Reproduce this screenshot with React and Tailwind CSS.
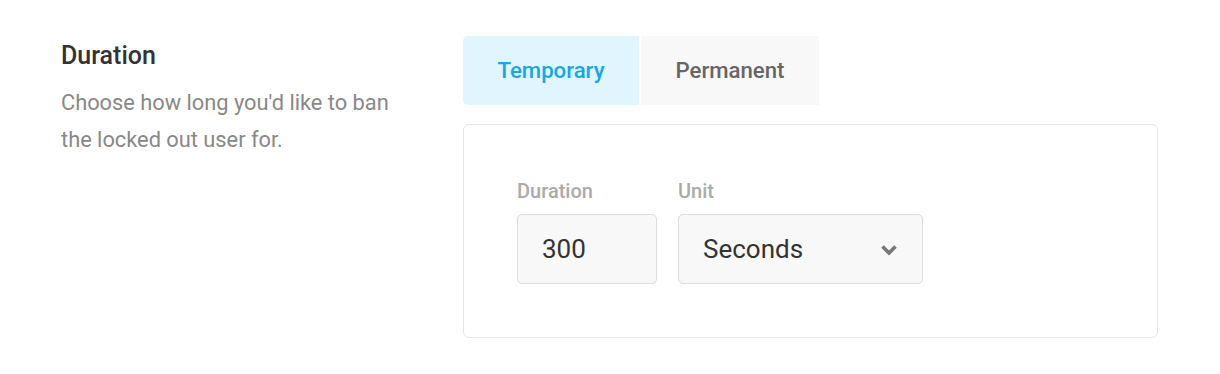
const App = () => {
    return (
        <div className="w-[1220px] h-[374px] bg-white font-['Roboto',sans-serif] flex pl-[61px] pt-[36px]">
            <div className="w-[402px] shrink-0 pt-[4px]">
                <h2 className="text-[25px] leading-[32px] font-medium text-[#333333]">Duration</h2>
                <p className="mt-[12px] text-[21.8px] leading-[37px] text-[#888888] w-[340px]">
                    Choose how long you'd like to ban the locked out user for.
                </p>
            </div>

            <div className="w-[695px]">
                <div className="flex gap-[2px]">
                    <button className="w-[176px] h-[69px] bg-[#e1f5fe] rounded-l-[5px] text-[22.2px] font-medium text-[#17a8e3]">
                        Temporary
                    </button>
                    <button className="w-[178px] h-[69px] bg-[#f8f8f8] text-[22.2px] font-medium text-[#666666]">
                        Permanent
                    </button>
                </div>

                <div className="mt-[19px] h-[214px] border border-[#e6e6e6] rounded-[6px] px-[53px] pt-[52px]">
                    <div className="flex gap-[21px]">
                        <div>
                            <label className="block text-[20px] leading-[28px] font-medium text-[#aaaaaa]">Duration</label>
                            <div className="mt-[9px] w-[140px] h-[70px] bg-[#f8f8f8] border border-[#dddddd] rounded-[5px] flex items-center px-[24px] text-[26px] text-[#333333]">
                                300
                            </div>
                        </div>
                        <div>
                            <label className="block text-[20px] leading-[28px] font-medium text-[#aaaaaa]">Unit</label>
                            <div className="mt-[9px] w-[245px] h-[70px] bg-[#f8f8f8] border border-[#dddddd] rounded-[5px] flex items-center justify-between pl-[24px] pr-[24px] text-[26px] text-[#333333]">
                                <span>Seconds</span>
                                <svg width="18" height="12" viewBox="0 0 18 12" className="mt-[1px]">
                                    <path d="M2.5 2.5 L9 9 L15.5 2.5" fill="none" stroke="#777777" strokeWidth="3.6" strokeLinejoin="miter" />
                                </svg>
                            </div>
                        </div>
                    </div>
                </div>
            </div>
        </div>
    );
};

export default App;
